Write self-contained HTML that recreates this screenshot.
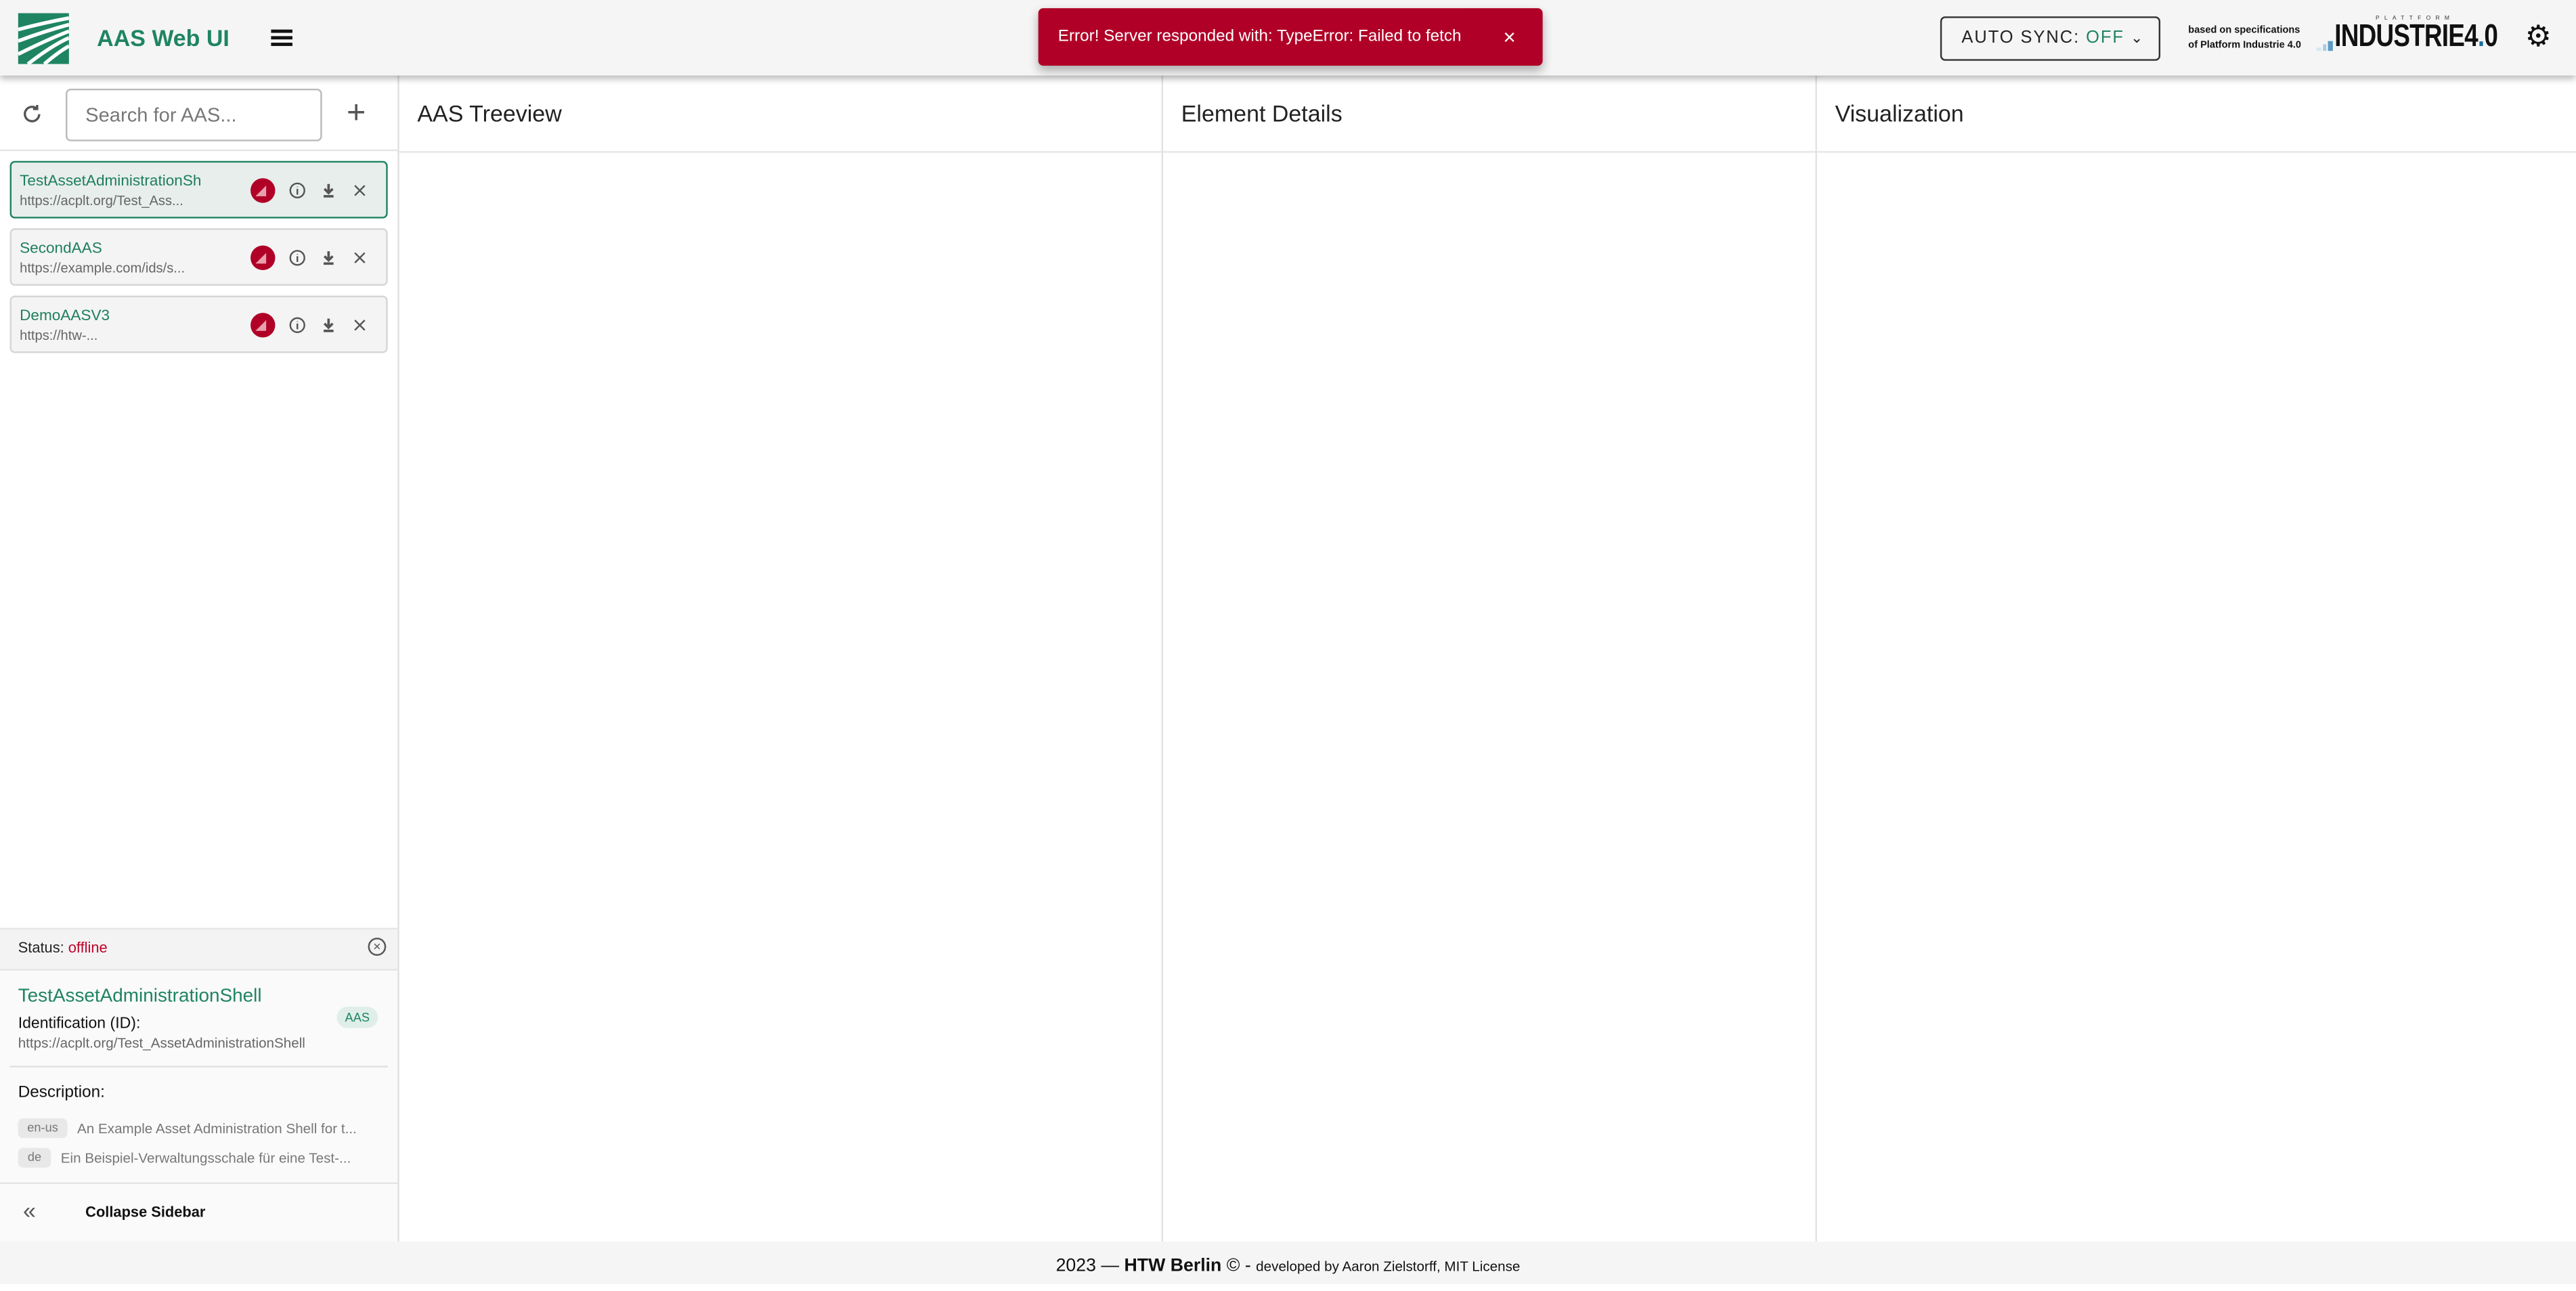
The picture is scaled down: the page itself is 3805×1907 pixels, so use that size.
<!DOCTYPE html>
<html><head><meta charset="utf-8"><style>
html,body{margin:0;padding:0;width:3805px;height:1897px;overflow:hidden;background:#fff}
#w{position:absolute;left:0;top:0;width:1568px;height:782px;transform:scale(2.42666,2.4258);transform-origin:0 0;font-family:"Liberation Sans",sans-serif;color:#222}
.a{position:absolute}
.hdr{left:0;top:0;width:1568px;height:46px;background:#f5f5f5;box-shadow:0 2px 4px rgba(0,0,0,.3);z-index:3}
.col{top:46px;height:710px;border-left:1px solid #e2e2e2}
.ch{position:absolute;left:11px;top:15px;font-size:14px;color:#222}
.cd{position:absolute;left:0;right:0;top:46px;border-top:1px solid #e6e6e6}
.card{left:6px;width:228px;height:33px;border:1px solid #d6d6d6;border-radius:3px;background:#f4f4f4}
.card .t{position:absolute;left:5px;top:6px;font-size:9.3px;color:#1e7f5c;white-space:nowrap;overflow:hidden;width:114px}
.card .u{position:absolute;left:5px;top:18px;font-size:8.3px;color:#666;white-space:nowrap}
.card svg{position:absolute;top:9px}
.bar{position:absolute;width:2.5px;bottom:15px}
</style></head><body><div id="w">
<div class="a hdr">
 <svg class="a" style="left:11px;top:8px" width="31" height="31" viewBox="0 0 31 31"><rect width="31" height="31" fill="#1f8461"/><path d="M0 10 Q15 6 31 3 M0 17 Q16 11 31 7 M0 25 Q18 16 31 11 M6 31 Q20 20 31 15 M16 31 Q24 24 31 20" stroke="#fff" stroke-width="2.2" fill="none"/></svg>
 <div class="a" style="left:59px;top:15px;font-size:14px;font-weight:bold;color:#1f8461">AAS Web UI</div>
 <div class="a" style="left:165px;top:18px;width:13px;height:2px;background:#111;box-shadow:0 4px 0 #111,0 8px 0 #111"></div>
 <div class="a" style="left:1181px;top:10px;width:132px;height:25px;border:1px solid #333;border-radius:3px;font-size:10.5px;letter-spacing:.8px;line-height:25px;text-indent:12px">AUTO SYNC: <span style="color:#1f8461">OFF</span> <span style="font-size:9px">&#8964;</span></div>
 <div class="a" style="left:1332px;top:15px;font-size:6px;line-height:9px;font-weight:bold;color:#111">based on specifications<br>of Platform Industrie 4.0</div>
 <div class="bar" style="left:1410px;height:2px;background:#d6e7f0"></div>
 <div class="bar" style="left:1413.5px;height:4px;background:#a9cbe0"></div>
 <div class="bar" style="left:1417px;height:6px;background:#5b9dc4"></div>
 <div class="a" style="left:1421px;top:12px;font-size:19px;font-weight:bold;color:#111;letter-spacing:-.4px;transform:scaleX(.8);transform-origin:0 0">INDUSTRIE4<span style="color:#1a6e9e">.</span>0</div>
 <div class="a" style="left:1446px;top:9px;font-size:3.5px;letter-spacing:3px;color:#333">PLATTFORM</div>
 <div class="a" style="left:1537px;top:12px;font-size:18px;color:#111;line-height:20px">&#9881;</div>
</div>
<div class="a" style="left:632px;top:5px;width:307px;height:35px;background:#b00027;border-radius:3px;box-shadow:0 3px 6px rgba(0,0,0,.3);z-index:4;color:#fff;font-size:10px;line-height:35px;text-indent:12px">Error! Server responded with: TypeError: Failed to fetch<span class="a" style="left:283px;top:0;font-size:13px;text-indent:0">×</span></div>

<div class="a" style="left:0;top:46px;width:242px;height:710px;background:#fff;border-right:1px solid #e2e2e2">
 <svg class="a" style="left:12px;top:16px" width="15" height="15" viewBox="0 0 24 24"><path d="M19 12a7 7 0 1 1-2-5M17 3v4h-4" stroke="#555" stroke-width="2.2" fill="none"/></svg>
 <div class="a" style="left:40px;top:8px;width:154px;height:30px;border:1px solid #bbb;border-radius:3px;font-size:12px;color:#777;line-height:30px;text-indent:11px">Search for AAS...</div>
 <div class="a" style="left:211px;top:12px;font-size:20px;color:#555;font-weight:300">+</div>
 <div class="a" style="left:0;right:0;top:45px;border-top:1px solid #e6e6e6"></div>
</div>
<div class="a card" style="top:98px;background:#e8eeec;border-color:#1f8461"><div class="t">TestAssetAdministrationSh</div><div class="u">https://acplt.org/Test_Ass...</div>
 <svg style="left:145px" width="76" height="16" viewBox="0 0 76 16"><circle cx="8" cy="8" r="7.5" fill="#b00027"/><path d="M3.5 11.5L10 5v6.5z" fill="#e8a0ac"/><circle cx="29" cy="8" r="4.3" stroke="#555" fill="none"/><path d="M29 7v3.5M29 5.6v.3" stroke="#555"/><path d="M48 4v5M45.5 7l2.5 2.5 2.5-2.5M45 11.5h6" stroke="#555" stroke-width="1.5" fill="none"/><path d="M64 5l6 6M70 5l-6 6" stroke="#555"/></svg></div>
<div class="a card" style="top:139px"><div class="t">SecondAAS</div><div class="u">https://example.com/ids/s...</div>
 <svg style="left:145px" width="76" height="16" viewBox="0 0 76 16"><circle cx="8" cy="8" r="7.5" fill="#b00027"/><path d="M3.5 11.5L10 5v6.5z" fill="#e8a0ac"/><circle cx="29" cy="8" r="4.3" stroke="#555" fill="none"/><path d="M29 7v3.5M29 5.6v.3" stroke="#555"/><path d="M48 4v5M45.5 7l2.5 2.5 2.5-2.5M45 11.5h6" stroke="#555" stroke-width="1.5" fill="none"/><path d="M64 5l6 6M70 5l-6 6" stroke="#555"/></svg></div>
<div class="a card" style="top:180px"><div class="t">DemoAASV3</div><div class="u">https://htw-...</div>
 <svg style="left:145px" width="76" height="16" viewBox="0 0 76 16"><circle cx="8" cy="8" r="7.5" fill="#b00027"/><path d="M3.5 11.5L10 5v6.5z" fill="#e8a0ac"/><circle cx="29" cy="8" r="4.3" stroke="#555" fill="none"/><path d="M29 7v3.5M29 5.6v.3" stroke="#555"/><path d="M48 4v5M45.5 7l2.5 2.5 2.5-2.5M45 11.5h6" stroke="#555" stroke-width="1.5" fill="none"/><path d="M64 5l6 6M70 5l-6 6" stroke="#555"/></svg></div>

<div class="a" style="left:0;top:565px;width:242px;height:191px;background:#fafafa;border-top:1px solid #e6e6e6"></div>
<div class="a" style="left:0;top:566px;width:242px;height:24px;background:#f3f3f3;border-bottom:1px solid #e4e4e4"></div>
<div class="a" style="left:11px;top:572px;font-size:9px;color:#222">Status: <span style="color:#c0002a">offline</span></div>
<div class="a" style="left:224px;top:571px;width:9px;height:9px;border:1.3px solid #555;border-radius:50%;font-size:8px;line-height:9px;text-align:center;color:#555">×</div>
<div class="a" style="left:11px;top:601px;font-size:11.5px;color:#1f8461">TestAssetAdministrationShell</div>
<div class="a" style="left:205px;top:613px;width:25px;height:13px;border-radius:7px;background:#dfeee8;color:#1f8461;font-size:7.5px;line-height:13px;text-align:center">AAS</div>
<div class="a" style="left:11px;top:618px;font-size:9.5px;color:#111">Identification (ID):</div>
<div class="a" style="left:11px;top:630px;font-size:8.5px;color:#666">https://acplt.org/Test_AssetAdministrationShell</div>
<div class="a" style="left:6px;top:649px;width:230px;border-top:1px solid #e0e0e0"></div>
<div class="a" style="left:11px;top:660px;font-size:10px;color:#111">Description:</div>
<div class="a" style="left:11px;top:681px;width:30px;height:12px;border-radius:3px;background:#e8e8e8;font-size:7.5px;color:#777;line-height:12px;text-align:center">en-us</div>
<div class="a" style="left:47px;top:682px;font-size:8.5px;color:#777">An Example Asset Administration Shell for t...</div>
<div class="a" style="left:11px;top:699px;width:20px;height:12px;border-radius:3px;background:#e8e8e8;font-size:7.5px;color:#777;line-height:12px;text-align:center">de</div>
<div class="a" style="left:37px;top:700px;font-size:8.5px;color:#777">Ein Beispiel-Verwaltungsschale für eine Test-...</div>
<div class="a" style="left:0;top:720px;width:242px;border-top:1px solid #e4e4e4"></div>
<div class="a" style="left:14px;top:729px;font-size:14px;color:#555">«</div>
<div class="a" style="left:52px;top:733px;font-size:9px;color:#111;font-weight:bold">Collapse Sidebar</div>

<div class="a col" style="left:242px;width:465px"><div class="ch">AAS Treeview</div><div class="cd"></div></div>
<div class="a col" style="left:707px;width:398px"><div class="ch">Element Details</div><div class="cd"></div></div>
<div class="a col" style="left:1105px;width:463px"><div class="ch">Visualization</div><div class="cd"></div></div>

<div class="a" style="left:0;top:756px;width:1568px;height:26px;background:#f5f5f5;text-align:center;font-size:11px;line-height:30px;color:#111">2023 — <b>HTW Berlin</b> © - <span style="font-size:8.5px">developed by Aaron Zielstorff, MIT License</span></div>
</div></body></html>
